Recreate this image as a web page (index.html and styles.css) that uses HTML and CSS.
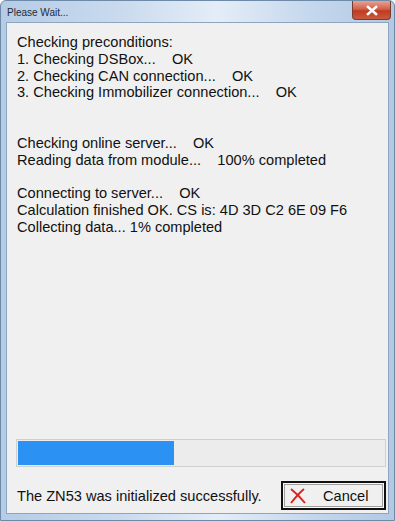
FILE: index.html
```
<!DOCTYPE html>
<html lang="en">
<head>
    <meta charset="UTF-8">
    <title>Please Wait...</title>
    <link rel="stylesheet" href="styles.css">
</head>
<body>
    <div class="window">
        <div class="titlebar">
            <span class="title">Please Wait...</span>
            <div class="close">
                <svg width="14" height="11" viewBox="0 0 14 11">
                    <path d="M3 2 L11 9 M11 2 L3 9" stroke="#fff" stroke-width="2.6" stroke-linecap="square"/>
                </svg>
            </div>
        </div>
        <div class="client">
            <div class="log">
                <p>Checking preconditions:</p>
                <p>1. Checking DSBox...&nbsp;&nbsp;&nbsp;&nbsp;OK</p>
                <p>2. Checking CAN connection...&nbsp;&nbsp;&nbsp;&nbsp;OK</p>
                <p>3. Checking Immobilizer connection...&nbsp;&nbsp;&nbsp;&nbsp;OK</p>
                <p>&nbsp;</p>
                <p>&nbsp;</p>
                <p>Checking online server...&nbsp;&nbsp;&nbsp;&nbsp;OK</p>
                <p>Reading data from module...&nbsp;&nbsp;&nbsp;&nbsp;100% completed</p>
                <p>&nbsp;</p>
                <p>Connecting to server...&nbsp;&nbsp;&nbsp;&nbsp;OK</p>
                <p>Calculation finished OK. CS is: 4D 3D C2 6E 09 F6</p>
                <p>Collecting data... 1% completed</p>
            </div>
            <div class="progress">
                <div class="fill" style="width: 42.6%"></div>
            </div>
            <div class="footer">
                <span class="status">The ZN53 was initialized successfully.</span>
                <button class="cancel">
                    <svg width="18" height="16" viewBox="0 0 18 16">
                        <path d="M2 1 C7 5 12 10 16 15" stroke="#e02020" stroke-width="2" fill="none"/>
                        <path d="M15 1 C10 5 6 10 2 15" stroke="#e02020" stroke-width="2" fill="none"/>
                    </svg>
                    <span>Cancel</span>
                </button>
            </div>
        </div>
    </div>
</body>
</html>
```
FILE: styles.css
```
body {
    margin: 0;
    background-color: #fff;
    font-family: "Liberation Sans", Arial, sans-serif;
}
.window {
    width: 395px;
    height: 521px;
    box-sizing: border-box;
    background: linear-gradient(90deg, #b5cce6 0%, #c9daee 30%, #e4edf7 55%, #c3d6ec 80%, #b2c9e4 100%);
    border: 1px solid #6f8aa8;
    border-radius: 6px 6px 0 0;
    padding: 0 5px 6px 5px;
    display: flex;
    flex-direction: column;
}
.titlebar {
    height: 21px;
    display: flex;
    align-items: flex-start;
    justify-content: space-between;
}
.title {
    font-family: "Liberation Sans", Arial, sans-serif;
    font-size: 10px;
    color: #1e2a3a;
    padding-top: 6px;
    padding-left: 1px;
}
.close {
    width: 37px;
    height: 18px;
    margin-right: -2px;
    background: linear-gradient(180deg, #e6a392 0%, #d2604a 45%, #c03a22 55%, #c95a3e 100%);
    border: 1px solid #7d3a2e;
    border-top: none;
    border-radius: 0 0 4px 4px;
    display: flex;
    align-items: center;
    justify-content: center;
}
.client {
    flex: 1;
    background-color: #f0f0f0;
    border: 1px solid #8ea5c0;
    display: flex;
    flex-direction: column;
    padding: 0 2px 3px 9px;
}
.log {
    flex: 1;
    padding-top: 11px;
    padding-left: 1px;
    font-size: 14.6px;
    line-height: 16.8px;
    color: #111;
}
.log p {
    margin: 0;
    white-space: pre;
}
.progress {
    height: 24px;
    border: 1px solid #d0d0d0;
    background-color: #ececec;
    padding: 1px;
}
.fill {
    height: 100%;
    background-color: #2b92f4;
}
.footer {
    display: flex;
    align-items: center;
    justify-content: space-between;
    padding-top: 14px;
}
.status {
    font-size: 14.6px;
    color: #111;
    padding-left: 1px;
}
.cancel {
    width: 105px;
    height: 29px;
    border: 2px solid #111;
    background-color: #f0f0f0;
    box-shadow: inset 0 0 0 1px #f8f8f8, inset 0 0 0 2px #a0a0a0;
    display: flex;
    align-items: center;
    padding: 0 0 0 6px;
    font-family: "Liberation Sans", Arial, sans-serif;
    font-size: 14.6px;
    color: #111;
}
.cancel span {
    margin-left: 16px;
}
```
